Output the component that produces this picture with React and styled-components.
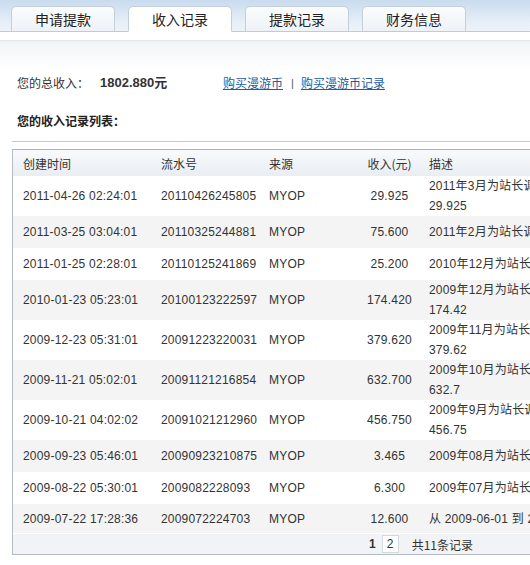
import React from "react";
import styled, { createGlobalStyle } from "styled-components";

const Global = createGlobalStyle`
  html, body { margin: 0; padding: 0; background: #fff; }
  body { font-family: "Liberation Sans", Arial, "Noto Sans CJK SC", sans-serif; font-size: 12px; color: #333; }
`;

const Page = styled.div`
  width: 530px;
  height: 565px;
  overflow: hidden;
  position: relative;
`;

const Inner = styled.div`
  width: 640px;
`;

const TabBar = styled.div`
  display: flex;
  gap: 13px;
  padding: 6px 0 0 11px;
  height: 25px;
  background: linear-gradient(to bottom, #c9dbee 0%, #e2ecf6 60%, #eef3f9 100%);
  border-bottom: 1px solid #bfcbd8;
`;

const Tab = styled.div`
  width: 102px;
  height: 24px;
  margin-bottom: -1px;
  border: 1px solid #c3cfdb;
  border-bottom: ${(p) => (p.$active ? "1px solid #fff" : "1px solid #bfcbd8")};
  border-radius: 5px 5px 0 0;
  background: ${(p) =>
    p.$active ? "#fff" : "linear-gradient(to bottom, #fafcfd 0%, #eef2f7 100%)"};
  display: flex;
  align-items: center;
  justify-content: center;
  font-size: 14px;
  color: #222;
  font-family: "Noto Sans CJK SC", sans-serif;
`;

const SubBand = styled.div`
  margin-top: 8px;
  height: 30px;
  border-top: 1px solid #e3e7eb;
  background: linear-gradient(to bottom, #f1f4f7 0%, #ffffff 100%);
`;

const Content = styled.div`
  padding: 2px 0 0 17px;
`;

const TotalRow = styled.div`
  display: flex;
  align-items: center;
  height: 20px;
  line-height: 20px;
`;

const TotalLabel = styled.span`
  font-family: "Noto Sans CJK SC", sans-serif;
  font-size: 12px;
  width: 83px;
`;

const TotalValue = styled.span`
  font-weight: bold;
  font-size: 13px;
  width: 123px;
  font-family: "Liberation Sans", "Noto Sans CJK SC", sans-serif;
`;

const Link = styled.a`
  color: #1d5c9e;
  text-decoration: underline;
  font-family: "Noto Sans CJK SC", sans-serif;
  cursor: pointer;
`;

const Sep = styled.span`
  color: #555;
  margin: 0 7px 0 8px;
  font-size: 11px;
`;

const ListTitle = styled.div`
  margin-top: 18px;
  height: 20px;
  line-height: 20px;
  font-weight: bold;
  font-family: "Noto Sans CJK SC", sans-serif;
  color: #222;
`;

const Rule = styled.div`
  margin: 10px 0 0 12px;
  border-top: 1px solid #c8c8c8;
`;

const Box = styled.div`
  margin: 7px 0 0 12px;
  border: 1px solid #b3bbc3;
  border-top-color: #a9b2bb;
`;

const Table = styled.table`
  border-collapse: collapse;
  table-layout: fixed;
  width: 620px;
`;

const HeadCell = styled.th`
  height: 26px;
  padding: 0 0 0 ${(p) => p.$pl || 11}px;
  text-align: ${(p) => (p.$center ? "center" : "left")};
  font-weight: normal;
  font-family: "Noto Sans CJK SC", sans-serif;
  font-size: 12px;
  color: #333;
  background: linear-gradient(to bottom, #f9fafc 0%, #e9eef3 100%);
`;

const Row = styled.tr`
  background: ${(p) => (p.$alt ? "#f4f4f4" : "#fff")};
`;

const Cell = styled.td`
  height: ${(p) => (p.$last ? 29 : 32)}px;
  padding: 0 0 0 ${(p) => p.$pl || 11}px;
  line-height: 20px;
  text-align: ${(p) => (p.$center ? "center" : "left")};
  white-space: nowrap;
  overflow: hidden;
  vertical-align: middle;
  color: #333;
  letter-spacing: 0.2px;
  font-family: "Liberation Sans", Arial, "Noto Sans CJK SC", sans-serif;
`;

const Footer = styled.div`
  height: 20px;
  margin-top: 0;
  border-top: 1px solid #fff;
  background: #f1f3f6;
  display: flex;
  align-items: center;
  padding-left: 356px;
  gap: 6px;
`;

const PageCur = styled.span`
  font-weight: bold;
`;

const PageBtn = styled.span`
  display: inline-flex;
  align-items: center;
  justify-content: center;
  width: 15px;
  height: 16px;
  background: #fff;
  border: 1px solid #d3d8dd;
`;

const Count = styled.span`
  margin-left: 7px;
  font-family: "Noto Sans CJK SC", sans-serif;
`;

const rows = [
  ["2011-04-26 02:24:01", "20110426245805", "29.925", ["2011年3月为站长调整收入", "29.925"]],
  ["2011-03-25 03:04:01", "20110325244881", "75.600", ["2011年2月为站长调整收入"]],
  ["2011-01-25 02:28:01", "20110125241869", "25.200", ["2010年12月为站长调整收入"]],
  ["2010-01-23 05:23:01", "20100123222597", "174.420", ["2009年12月为站长调整收入", "174.42"]],
  ["2009-12-23 05:31:01", "20091223220031", "379.620", ["2009年11月为站长调整收入", "379.62"]],
  ["2009-11-21 05:02:01", "20091121216854", "632.700", ["2009年10月为站长调整收入", "632.7"]],
  ["2009-10-21 04:02:02", "20091021212960", "456.750", ["2009年9月为站长调整收入", "456.75"]],
  ["2009-09-23 05:46:01", "20090923210875", "3.465", ["2009年08月为站长调整收入"]],
  ["2009-08-22 05:30:01", "2009082228093", "6.300", ["2009年07月为站长调整收入"]],
  ["2009-07-22 17:28:36", "2009072224703", "12.600", ["从 2009-06-01 到 2009-06-30"]],
];

export default function App() {
  return (
    <Page>
      <Global />
      <Inner>
        <TabBar>
          <Tab>申请提款</Tab>
          <Tab $active>收入记录</Tab>
          <Tab>提款记录</Tab>
          <Tab>财务信息</Tab>
        </TabBar>
        <SubBand />
        <Content>
          <TotalRow>
            <TotalLabel>您的总收入：</TotalLabel>
            <TotalValue>1802.880元</TotalValue>
            <Link>购买漫游币</Link>
            <Sep>|</Sep>
            <Link>购买漫游币记录</Link>
          </TotalRow>
          <ListTitle>您的收入记录列表：</ListTitle>
        </Content>
        <Rule />
        <Box>
          <Table>
            <colgroup>
              <col style={{ width: 137 }} />
              <col style={{ width: 108 }} />
              <col style={{ width: 87 }} />
              <col style={{ width: 78 }} />
              <col style={{ width: 210 }} />
            </colgroup>
            <thead>
              <tr>
                <HeadCell $pl={10}>创建时间</HeadCell>
                <HeadCell>流水号</HeadCell>
                <HeadCell>来源</HeadCell>
                <HeadCell $center $pl={0}>收入(元)</HeadCell>
                <HeadCell $pl={6}>描述</HeadCell>
              </tr>
            </thead>
            <tbody>
              {rows.map((r, i) => {
                const last = i === rows.length - 1;
                return (
                  <Row key={r[1]} $alt={i % 2 === 1}>
                    <Cell $last={last} $pl={10}>{r[0]}</Cell>
                    <Cell $last={last}>{r[1]}</Cell>
                    <Cell $last={last}>MYOP</Cell>
                    <Cell $last={last} $center $pl={0}>{r[2]}</Cell>
                    <Cell $last={last} $pl={6}>
                      {r[3].map((line, j) => (
                        <div key={j}>{line}</div>
                      ))}
                    </Cell>
                  </Row>
                );
              })}
            </tbody>
          </Table>
          <Footer>
            <PageCur>1</PageCur>
            <PageBtn>2</PageBtn>
            <Count>共11条记录</Count>
          </Footer>
        </Box>
      </Inner>
    </Page>
  );
}
